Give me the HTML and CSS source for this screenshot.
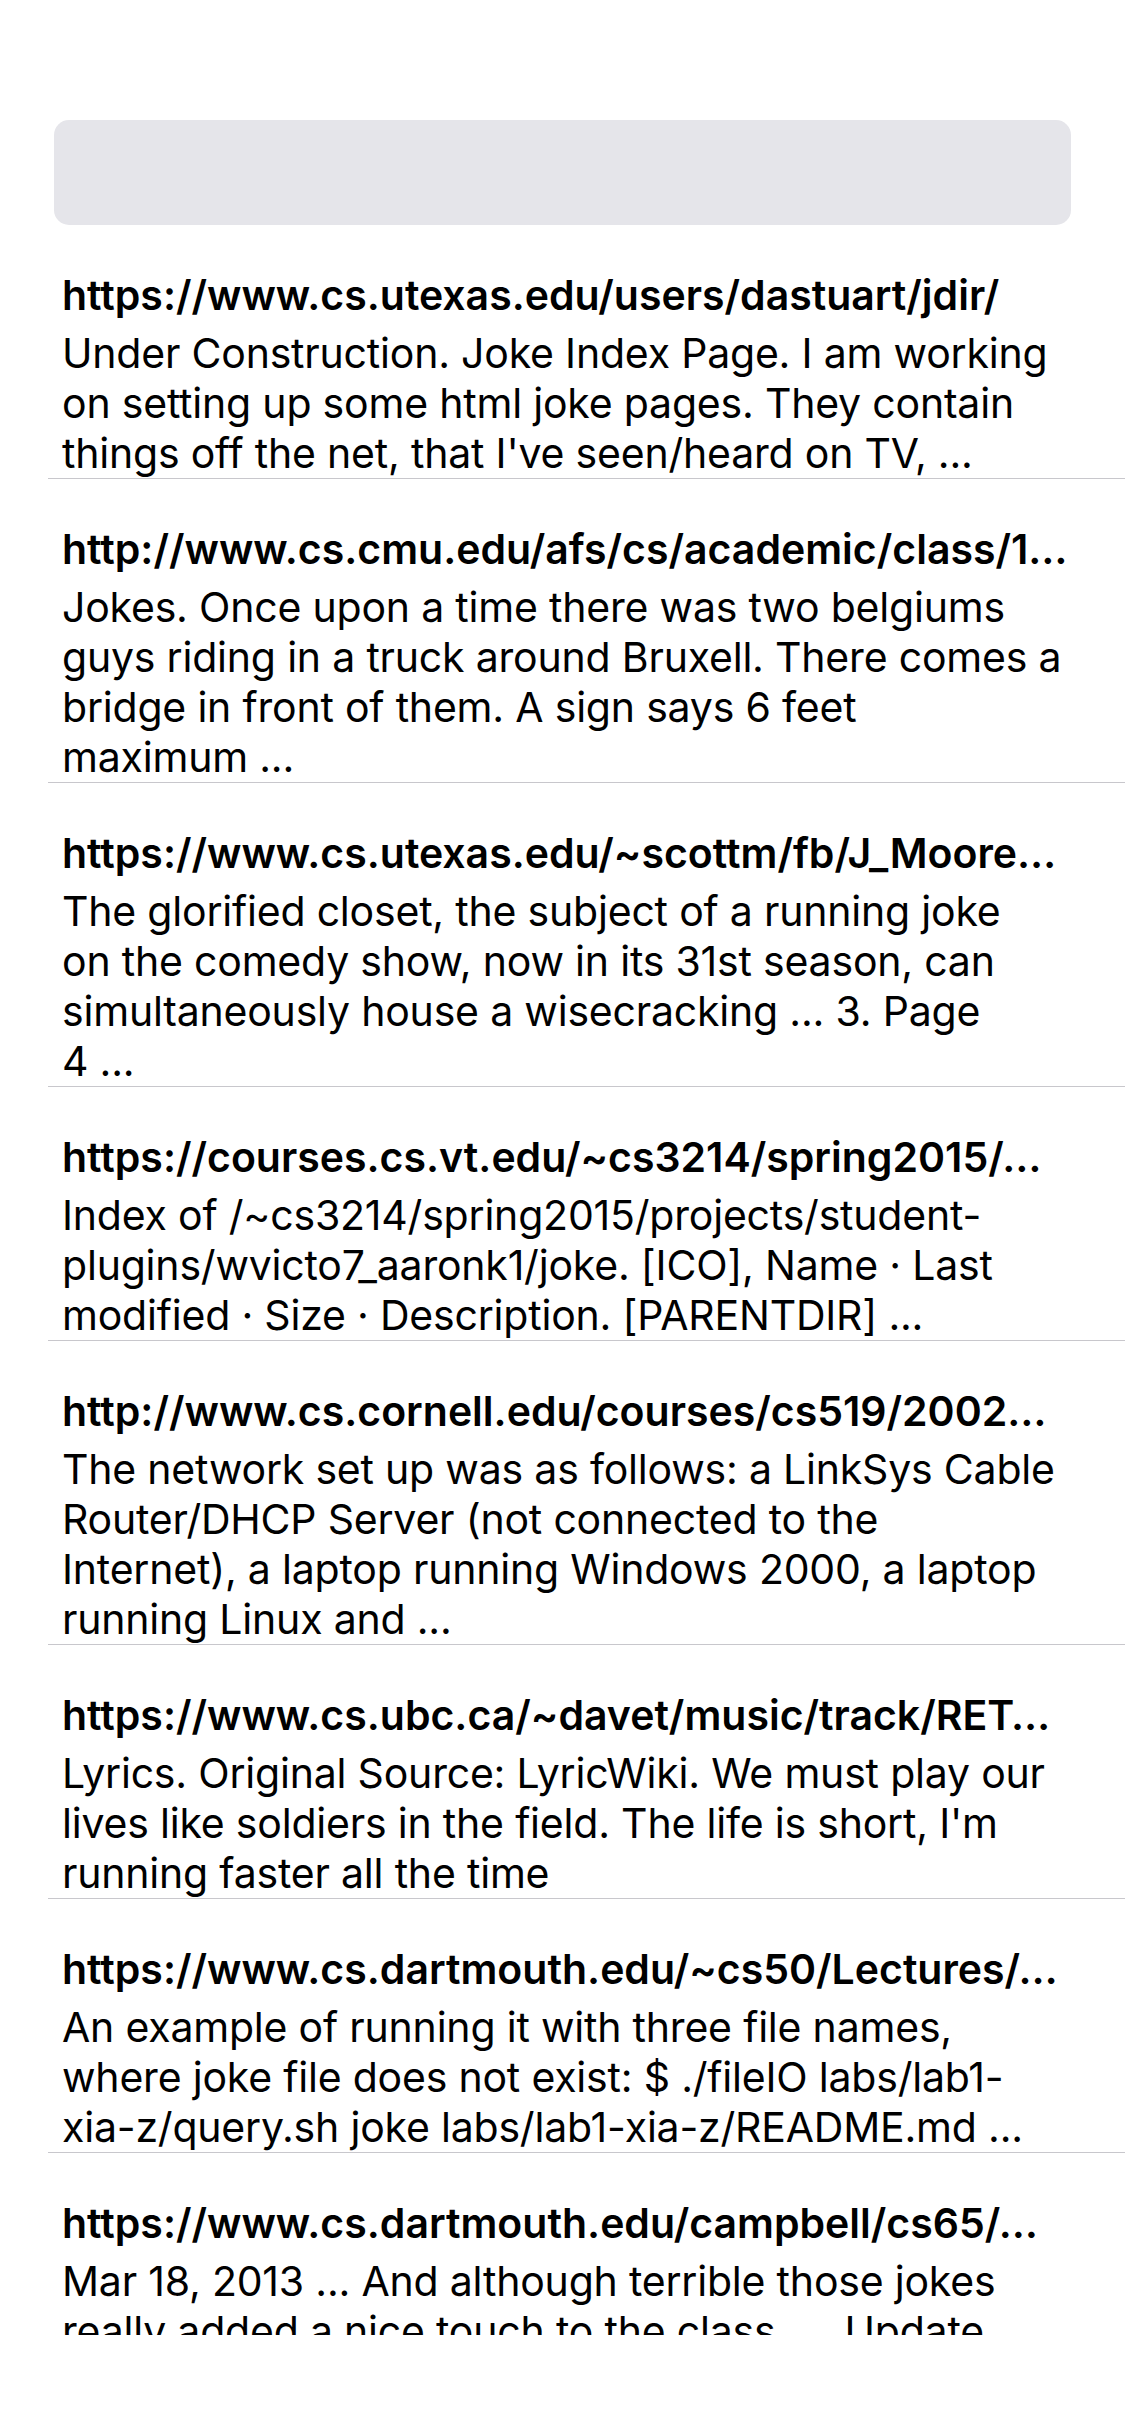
FILE: index.html
```html
<!DOCTYPE html>
<html lang="en">
<head>
<meta charset="utf-8">
<title>Search results</title>
<link rel="stylesheet" href="styles.css">
</head>
<body>
<div class="page">
  <div class="search"></div>
  <div class="list">
    <div class="row">
      <div class="title">https://www.cs.utexas.edu/users/dastuart/jdir/</div>
      <p class="snippet">Under Construction. Joke Index Page. I am working<br>on setting up some html joke pages. They contain<br>things off the net, that I've seen/heard on TV, ...</p>
    </div>
    <div class="row">
      <div class="title">http://www.cs.cmu.edu/afs/cs/academic/class/1…</div>
      <p class="snippet">Jokes. Once upon a time there was two belgiums<br>guys riding in a truck around Bruxell. There comes a<br>bridge in front of them. A sign says 6 feet<br>maximum ...</p>
    </div>
    <div class="row">
      <div class="title">https://www.cs.utexas.edu/~scottm/fb/J_Moore…</div>
      <p class="snippet">The glorified closet, the subject of a running joke<br>on the comedy show, now in its 31st season, can<br>simultaneously house a wisecracking ... 3. Page<br>4 ...</p>
    </div>
    <div class="row">
      <div class="title">https://courses.cs.vt.edu/~cs3214/spring2015/…</div>
      <p class="snippet">Index of /~cs3214/spring2015/projects/student-<br>plugins/wvicto7_aaronk1/joke. [ICO], Name · Last<br>modified · Size · Description. [PARENTDIR] ...</p>
    </div>
    <div class="row">
      <div class="title">http://www.cs.cornell.edu/courses/cs519/2002…</div>
      <p class="snippet">The network set up was as follows: a LinkSys Cable<br>Router/DHCP Server (not connected to the<br>Internet), a laptop running Windows 2000, a laptop<br>running Linux and ...</p>
    </div>
    <div class="row">
      <div class="title">https://www.cs.ubc.ca/~davet/music/track/RET…</div>
      <p class="snippet">Lyrics. Original Source: LyricWiki. We must play our<br>lives like soldiers in the field. The life is short, I'm<br>running faster all the time</p>
    </div>
    <div class="row">
      <div class="title">https://www.cs.dartmouth.edu/~cs50/Lectures/…</div>
      <p class="snippet">An example of running it with three file names,<br>where joke file does not exist: $ ./fileIO labs/lab1-<br>xia-z/query.sh joke labs/lab1-xia-z/README.md ...</p>
    </div>
    <div class="row">
      <div class="title">https://www.cs.dartmouth.edu/campbell/cs65/…</div>
      <p class="snippet">Mar 18, 2013 ... And although terrible those jokes<br>really added a nice touch to the class. ... Update</p>
    </div>
  </div>
</div>
</body>
</html>
```
FILE: styles.css
```css
html, body {
  margin: 0;
  padding: 0;
  background: #ffffff;
}

body {
  width: 1125px;
  height: 2436px;
  overflow: hidden;
  font-family: Inter, Roboto, "Liberation Sans", sans-serif;
  color: #000000;
}

.page {
  padding-top: 120px;
}

.search {
  margin: 0 54px;
  height: 105px;
  border-radius: 15px;
  background: #e5e5ea;
}

.list {
  height: 2110px;
  overflow: hidden;
}

.row {
  margin-left: 48px;
  padding: 45px 0 0 14px;
  border-bottom: 1px solid #c8c7cc;
  overflow: hidden;
}

.title {
  font-size: 41px;
  font-weight: 600;
  line-height: 50px;
  height: 50px;
  white-space: nowrap;
  overflow: hidden;
  margin-bottom: 8px;
  letter-spacing: 0;
}

.snippet {
  margin: 0;
  font-size: 41px;
  font-weight: 400;
  line-height: 50px;
  white-space: nowrap;
  letter-spacing: -0.2px;
}
```
